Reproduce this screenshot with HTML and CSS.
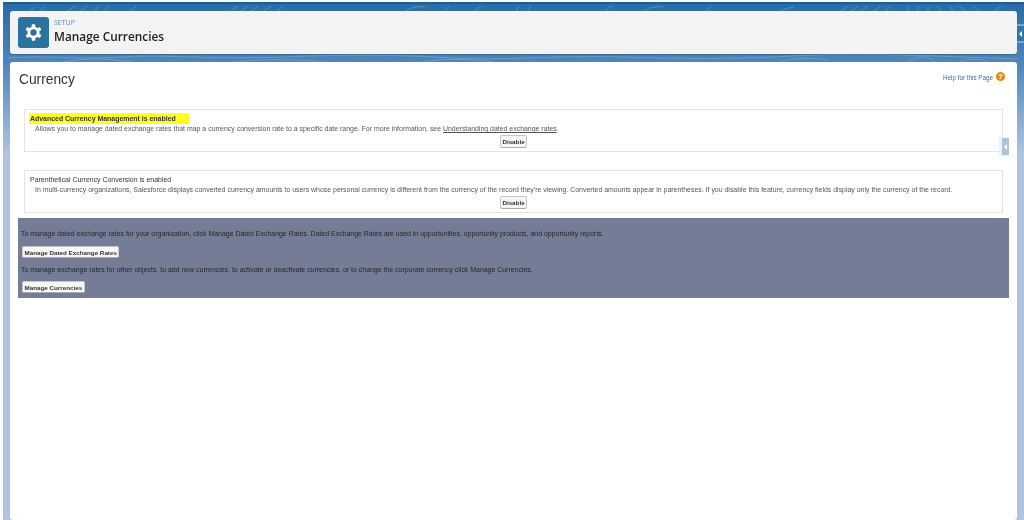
FILE: index.html
```html
<!DOCTYPE html>
<html lang="en">
<head>
<meta charset="utf-8">
<title>Manage Currencies</title>
<link rel="stylesheet" href="styles.css">
</head>
<body>
<main class="page">
  <svg class="pattern" width="1021" height="60" viewBox="0 0 1021 60" fill="none" stroke="#9dbcdc" stroke-width="1" opacity=".4">
    <path d="M25 9l7-6M35 9l7-6M62 9l10-7M75 9l9-7M90 9l6-7M100 9l6-7M125 9l8-7M225 9l10-7M235 9l10-7M245 9l10-7M258 9l10-7M272 9l8-7M400 9c8-6 14-7 22-6M440 9l6-7M470 9l8-7M512 9l4-7M524 9l4-7M600 9c4-4 6-6 10-7M640 9c6-6 12-7 20-6M700 9l8-7M775 9c6-4 10-5 16-6M835 9l10-7M845 9l10-7M855 9l10-7M868 9l10-7M880 9l8-7M905 9V2M915 9V2M925 9V2M940 9l-6-7M952 9l-6-7M964 9l-8-7M978 9l-8-7M990 9l8-7"/>
    <path d="M5 54c40-3 70 2 115-1s90 3 160 0 120-2 170 1 100-3 170-1 110 2 170-1 90-2 225 3M60 58c20-4 40-4 70 0M230 58c30-3 60-3 90 0M420 58c20-4 50-3 70 0M775 59c10-5 30-6 50-3M905 59c8-8 20-8 28 0M955 59c10-6 24-4 30-1"/>
  </svg>
  <button class="tab tab-top" type="button" aria-label="Collapse"><span class="arrow"></span></button>
  <header class="head card">
    <div class="badge">
      <svg width="17" height="17" viewBox="0 0 24 24">
        <circle cx="12" cy="12" r="6.500" fill="none" stroke="#fff" stroke-width="4"/>
        <g fill="#fff">
          <rect x="9.500" y=".5" width="5" height="5.500" rx="1"/>
          <rect x="9.500" y=".5" width="5" height="5.500" rx="1" transform="rotate(60 12 12)"/>
          <rect x="9.500" y=".5" width="5" height="5.500" rx="1" transform="rotate(120 12 12)"/>
          <rect x="9.500" y=".5" width="5" height="5.500" rx="1" transform="rotate(180 12 12)"/>
          <rect x="9.500" y=".5" width="5" height="5.500" rx="1" transform="rotate(240 12 12)"/>
          <rect x="9.500" y=".5" width="5" height="5.500" rx="1" transform="rotate(300 12 12)"/>
        </g>
      </svg>
    </div>
    <div class="head-text">
      <div class="eyebrow">SETUP</div>
      <h1 class="title">Manage Currencies</h1>
    </div>
  </header>
  <section class="content card">
    <div class="top-row">
      <h2 class="heading">Currency</h2>
      <a class="help" href="#">Help for this Page <span class="help-icon">?</span></a>
    </div>
    <div class="feature first">
      <div class="feature-title"><mark class="hl">Advanced Currency Management is enabled</mark></div>
      <p class="feature-desc">Allows you to manage dated exchange rates that map a currency conversion rate to a specific date range. For more information, see <a class="link" href="#">Understanding dated exchange rates</a>.</p>
      <div class="center"><button class="btn" type="button">Disable</button></div>
    </div>
    <button class="tab tab-inner" type="button" aria-label="Collapse"><span class="arrow"></span></button>
    <div class="feature second">
      <div class="feature-title">Parenthetical Currency Conversion is enabled</div>
      <p class="feature-desc">In multi-currency organizations, Salesforce displays converted currency amounts to users whose personal currency is different from the currency of the record they're viewing. Converted amounts appear in parentheses. If you disable this feature, currency fields display only the currency of the record.</p>
      <div class="center"><button class="btn" type="button">Disable</button></div>
    </div>
    <div class="panel">
      <p class="panel-text">To manage dated exchange rates for your organization, click Manage Dated Exchange Rates. Dated Exchange Rates are used in opportunities, opportunity products, and opportunity reports.</p>
      <button class="btn" type="button">Manage Dated Exchange Rates</button>
      <p class="panel-text second-text">To manage exchange rates for other objects, to add new currencies, to activate or deactivate currencies, or to change the corporate currency click Manage Currencies.</p>
      <button class="btn" type="button">Manage Currencies</button>
    </div>
  </section>
</main>
</body>
</html>
```
FILE: styles.css
```css
* { box-sizing: border-box; }
html, body { margin: 0; height: 520px; overflow: hidden; }
body {
  background: #fff;
  font-family: "Liberation Sans", Arial, sans-serif;
  color: #333;
}
.page {
  position: relative;
  height: 518px;
  margin: 2px 0 0 3px;
  padding: 7px 7px 0 7px;
  border-top: 2px solid #1b5f93;
  background: linear-gradient(#2a6ca5 0, #4f86bb 60px, #b0c4df 150px, #b0c4df 100%);
  display: flex;
  flex-direction: column;
  gap: 8px;
  filter: blur(.4px);
}
.pattern { position: absolute; left: 0; top: 0; }
.card { background: #fff; border-radius: 3px; position: relative; }
.head {
  height: 43px;
  flex: none;
  background: #f3f3f3;
  display: flex;
  align-items: center;
  padding: 0 8px;
  gap: 5px;
  box-shadow: 0 1px 1px rgba(0,0,0,.2);
}
.badge {
  width: 31px; height: 31px;
  background: #2a739f;
  border-radius: 3px;
  display: flex; align-items: center; justify-content: center;
}
.eyebrow { font: 7px/9px "Open Sans", sans-serif; color: #5b8db8; margin-top: -3px; }
.title { margin: 2px 0 0; font: 600 11.850px/15px "Open Sans", sans-serif; color: #222; }
.content { flex: 1; padding: 0 8px; }
.top-row { display: flex; justify-content: space-between; height: 47px; padding: 8px 1px 0 1px; }
.heading { margin: 0; font-weight: 400; font-size: 13.750px; line-height: 20px; color: #333; }
.help { font-size: 6.300px; color: #3f6fa5; text-decoration: none; display: flex; align-items: flex-start; gap: 3px; line-height: 9px; padding-top: 3px; margin-right: 3px; }
.help-icon {
  width: 9px; height: 9px; border-radius: 50%;
  background: #e8890c; color: #fff; font-weight: 700; font-size: 8px; line-height: 9px; text-align: center;
  margin-top: -1px;
}
.feature {
  margin: 0 6px;
  height: 43px;
  border: 1px solid #e4e4e4;
  padding: 4px 5px 0;
  font-size: 6.950px;
  line-height: 10px;
}
.feature.second { margin-top: 18px; }
.feature-title { color: #333; font-weight: 400; }
.first .feature-title { font-weight: 700; }
.hl { background: #ffff1e; color: #333; padding: 2px 13px 2px 1px; margin-left: -1px; }
.feature-desc { margin: 0 0 0 5px; color: #555; white-space: nowrap; }
.link { color: #555; }
.center { text-align: center; margin-top: 1px; }
.btn {
  font: 700 6.250px/9px "Liberation Sans", Arial, sans-serif;
  color: #333;
  background: #f5f5f5;
  border: 1px solid #c6c6c6;
  border-bottom-color: #aaa;
  border-radius: 2px;
  padding: 1px 1.500px;
  height: 13px;
}
.panel {
  margin: 5px 0 0;
  height: 80px;
  background: #747d95;
  padding: 12px 4px 0 3px;
  font-size: 6.950px;
  color: #23262f;
}
.panel-text { margin: 0 0 8px; line-height: 8px; white-space: nowrap; }
.panel .second-text { margin-bottom: 7px; }
.panel .btn { display: block; height: 12px; padding: 0 1.500px; background: #f7f7f7; margin-bottom: 8px; margin-left: 1px; }
.tab {
  position: absolute;
  padding: 0; border: 0;
  display: flex; align-items: center; justify-content: center;
}
.tab-top {
  right: 0; top: 20px; width: 10px; height: 19px;
  background: #2f77a8;
  border: 2px solid #7fa6c4; border-right: 0;
  border-radius: 3px 0 0 3px;
}
.tab-inner {
  right: 8px; top: 75px; width: 10px; height: 19px;
  background: #a9c5d6;
  border: 1px solid #f0f0f0; border-left-width: 3px; border-right: 0;
  border-radius: 2px 0 0 2px;
}
.arrow { width: 0; height: 0; border: 3px solid transparent; border-right: 3px solid #fff; border-left: 0; }
```
